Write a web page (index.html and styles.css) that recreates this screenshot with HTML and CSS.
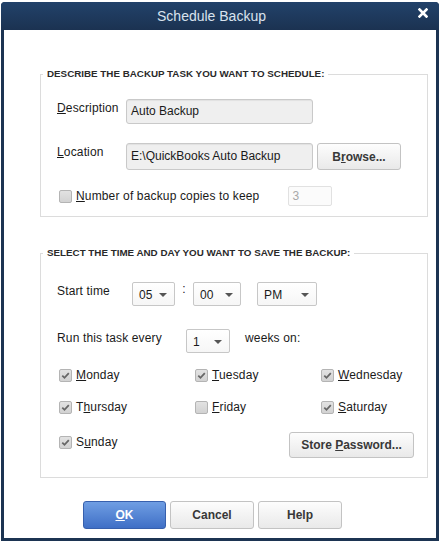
FILE: index.html
```html
<!DOCTYPE html>
<html lang="en">
<head>
    <meta charset="UTF-8">
    <title>Schedule Backup</title>
    <link rel="stylesheet" href="styles.css">
</head>
<body>

    <div class="dialog">
        <div class="titlebar">
            <span class="title">Schedule Backup</span>
            <svg class="close" width="10" height="10" viewBox="0 0 10 10">
                <path d="M1.5 1.5 L8.5 8.5 M8.5 1.5 L1.5 8.5" stroke="#ffffff" stroke-width="2.6" stroke-linecap="square"/>
            </svg>
        </div>

        <div class="content">
            <fieldset class="group">
                <legend>DESCRIBE THE BACKUP TASK YOU WANT TO SCHEDULE:</legend>
                <div class="group-body task-body">
                    <div class="row">
                        <span class="field-label"><u>D</u>escription</span>
                        <div class="textbox">Auto Backup</div>
                    </div>
                    <div class="row row-location">
                        <span class="field-label"><u>L</u>ocation</span>
                        <div class="textbox">E:\QuickBooks Auto Backup</div>
                        <button class="btn btn-browse">B<u>r</u>owse...</button>
                    </div>
                    <div class="row row-copies">
                        <label class="check">
                            <span class="box"></span>
                            <span><u>N</u>umber of backup copies to keep</span>
                        </label>
                        <div class="spin">3</div>
                    </div>
                </div>
            </fieldset>

            <fieldset class="group group-time">
                <legend>SELECT THE TIME AND DAY YOU WANT TO SAVE THE BACKUP:</legend>
                <div class="group-body time-body">
                    <div class="row row-start">
                        <span class="field-label label-start">Start time</span>
                        <div class="select sel-hour">05<span class="arrow"></span></div>
                        <span class="colon">:</span>
                        <div class="select sel-min">00<span class="arrow"></span></div>
                        <div class="select sel-ampm">PM<span class="arrow"></span></div>
                    </div>
                    <div class="row row-every">
                        <span class="field-label label-every">Run this task every</span>
                        <div class="select sel-weeks">1<span class="arrow"></span></div>
                        <span class="weeks">weeks on:</span>
                    </div>

                    <div class="days">
                        <label class="check"><span class="box checked"></span><span><u>M</u>onday</span></label>
                        <label class="check"><span class="box checked"></span><span><u>T</u>uesday</span></label>
                        <label class="check"><span class="box checked"></span><span><u>W</u>ednesday</span></label>

                        <label class="check"><span class="box checked"></span><span>T<u>h</u>ursday</span></label>
                        <label class="check"><span class="box"></span><span><u>F</u>riday</span></label>
                        <label class="check"><span class="box checked"></span><span><u>S</u>aturday</span></label>

                        <label class="check last"><span class="box checked"></span><span>S<u>u</u>nday</span></label>
                        <span class="last"></span>
                        <button class="btn btn-store last">Store <u>P</u>assword...</button>
                    </div>
                </div>
            </fieldset>

            <div class="actions">
                <button class="btn btn-ok"><u>O</u>K</button>
                <button class="btn">Cancel</button>
                <button class="btn">Help</button>
            </div>
        </div>
    </div>

</body>
</html>
```

FILE: styles.css
```css
body {
    margin: 0;
    background: #ffffff;
    font-family: "Liberation Sans", Arial, sans-serif;
    font-size: 12px;
    letter-spacing: 0.15px;
    color: #1a1a1a;
}
.dialog {
    margin: 2px 0 0 1px;
    width: 438px;
    height: 539px;
    box-sizing: border-box;
    padding-bottom: 3px;
    background: #1c3452;
    border-radius: 4px 4px 0 0;
    display: flex;
    flex-direction: column;
}
.titlebar {
    height: 28px;
    flex: none;
    display: flex;
    align-items: center;
    background: linear-gradient(#22426a, #1b3251);
    border-radius: 4px 4px 0 0;
}
.title {
    flex: 1;
    text-align: center;
    padding-left: 4px;
    font-size: 14px;
    letter-spacing: 0;
    color: #d9e3ee;
}
.close {
    margin: 0 11px 6px 0;
}
.content {
    flex: 1;
    margin: 0 3px;
    background: #ffffff;
    padding: 38px 0 0 36px;
}

/* group boxes */
.group {
    width: 388px;
    box-sizing: border-box;
    margin: 0;
    padding: 0;
    border: 1px solid #dcdcdc;
}
.group legend {
    margin-left: 2px;
    padding: 0 4px;
    font-size: 9.8px;
    line-height: 12px;
    letter-spacing: 0;
    font-weight: bold;
    color: #2a2a2a;
}
.group-time {
    margin-top: 30px;
}
.group-body {
    padding-left: 16px;
}
.task-body {
    padding-top: 19px;
    padding-bottom: 10px;
}
.time-body {
    padding-top: 23px;
    padding-bottom: 19px;
}
.row {
    display: flex;
    align-items: flex-start;
}
.field-label {
    width: 69px;
    padding-top: 2px;
    line-height: 14px;
}
.row-location {
    margin-top: 19px;
}
.row-copies {
    margin-top: 16px;
    align-items: center;
}

/* inputs */
.textbox {
    width: 187px;
    height: 25px;
    box-sizing: border-box;
    padding: 0 4px;
    line-height: 23px;
    letter-spacing: 0;
    background: #efefef;
    border: 1px solid #c9c9c9;
    border-radius: 3px;
    box-shadow: inset 0 1px 1px rgba(0, 0, 0, 0.06);
}
.row-location .textbox {
    height: 27px;
    line-height: 25px;
}
.spin {
    margin-left: 29px;
    width: 44px;
    height: 20px;
    box-sizing: border-box;
    padding: 0 3px;
    line-height: 18px;
    color: #a8a8a8;
    background: #fbfbfb;
    border: 1px solid #e1e1e1;
    border-radius: 2px;
}
.select {
    position: relative;
    height: 24px;
    box-sizing: border-box;
    padding: 3px 0 0 6px;
    line-height: 18px;
    background: linear-gradient(#ffffff, #f6f6f6);
    border: 1px solid #c7c7c7;
    border-radius: 2px;
}
.arrow {
    position: absolute;
    right: 7px;
    top: 10px;
    width: 0;
    height: 0;
    border-left: 4px solid transparent;
    border-right: 4px solid transparent;
    border-top: 4px solid #555555;
}
.label-start {
    width: 75px;
}
.sel-hour {
    width: 43px;
}
.colon {
    width: 18px;
    text-align: center;
    line-height: 14px;
}
.sel-min {
    width: 48px;
}
.sel-ampm {
    width: 60px;
    margin-left: 16px;
}
.row-every {
    margin-top: 23px;
}
.label-every {
    width: 129px;
}
.sel-weeks {
    width: 44px;
}
.weeks {
    margin-left: 15px;
    padding-top: 2px;
    line-height: 14px;
}

/* checkboxes */
.check {
    display: flex;
    align-items: center;
    height: 20px;
    padding-left: 2px;
}
.box {
    width: 13px;
    height: 13px;
    box-sizing: border-box;
    margin-right: 4px;
    background: linear-gradient(#e2e2e2, #d2d2d2);
    border: 1px solid #b4b4b4;
    border-radius: 2px;
}
.box.checked {
    background: url("data:image/svg+xml,%3Csvg xmlns='http://www.w3.org/2000/svg' width='11' height='11'%3E%3Cpath d='M2.3 5.6 L4.5 7.8 L8.8 3.2' fill='none' stroke='%23676767' stroke-width='1.8'/%3E%3C/svg%3E") center no-repeat, linear-gradient(#e2e2e2, #d2d2d2);
}
.days {
    margin-top: 12px;
    display: grid;
    grid-template-columns: 136px 126px auto;
    row-gap: 12px;
    align-items: start;
}
.days .last {
    margin-top: 3px;
}

/* buttons */
.btn {
    height: 28px;
    box-sizing: border-box;
    padding: 0;
    font-family: "Liberation Sans", Arial, sans-serif;
    font-size: 12px;
    font-weight: bold;
    letter-spacing: 0;
    color: #383838;
    background: linear-gradient(#fdfdfd, #e9e9e9);
    border: 1px solid #c3c3c3;
    border-radius: 3px;
}
.btn-browse {
    width: 84px;
    height: 27px;
    margin-left: 4px;
}
.btn-store {
    width: 125px;
    height: 26px;
    margin-left: -30px;
}
.actions {
    display: flex;
    gap: 4px;
    margin-top: 23px;
    padding-left: 43px;
}
.actions .btn {
    width: 84px;
}
.actions .btn-ok {
    width: 83px;
    color: #ffffff;
    background: linear-gradient(#6f9ee3, #3f6fc6);
    border-color: #3760ad;
}
```
